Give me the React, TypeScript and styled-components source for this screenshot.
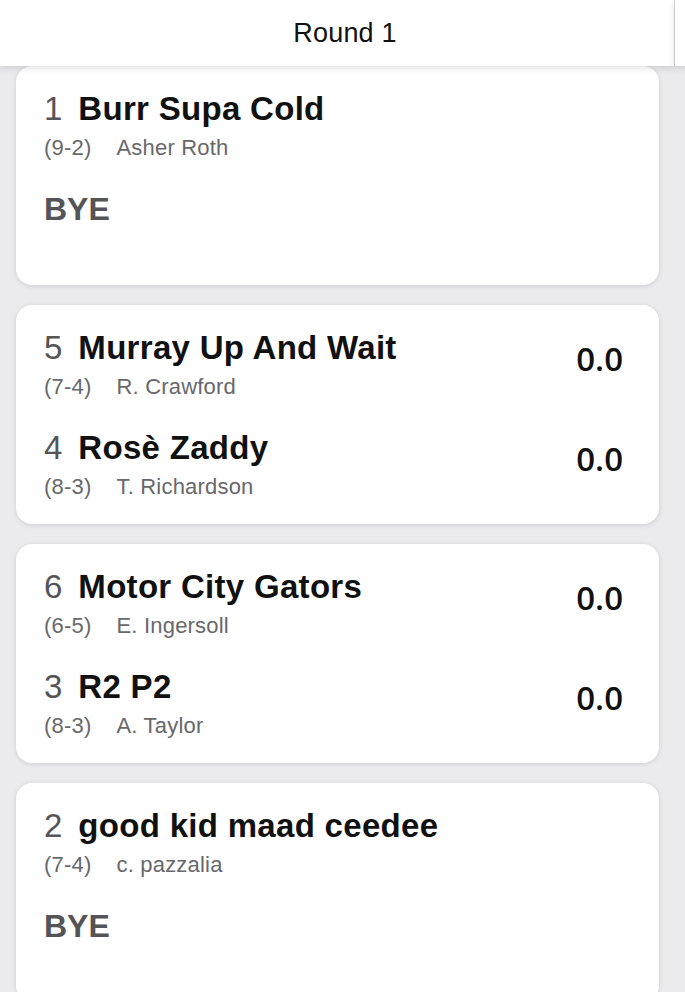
import React from "react";
import styled, { createGlobalStyle } from "styled-components";

const Global = createGlobalStyle`
  html, body {
    margin: 0;
    padding: 0;
    background: #ebebed;
    overflow: hidden;
  }
  body {
    font-family: "Liberation Sans", Arial, sans-serif;
    -webkit-font-smoothing: antialiased;
  }
`;

const Page = styled.div`
  display: flex;
  width: 685px;
  min-height: 992px;
  background: #ebebed;
`;

const Column = styled.section<{ $width?: number }>`
  display: flex;
  flex-direction: column;
  flex: ${(p) => (p.$width ? `0 0 ${p.$width}px` : "1 1 auto")};
  min-width: 0;
`;

const Header = styled.header<{ $divider?: boolean }>`
  position: relative;
  z-index: 2;
  height: 66px;
  box-sizing: border-box;
  padding-left: 16px;
  display: flex;
  align-items: center;
  justify-content: center;
  background: #ffffff;
  border-right: ${(p) => (p.$divider ? "1px solid #d9d9db" : "none")};
  box-shadow: 0 2px 7px rgba(0, 0, 0, 0.13);
  font-family: "Liberation Sans", Arial, sans-serif;
  font-size: 27px;
  letter-spacing: 0.2px;
  color: #111111;
`;

const List = styled.div`
  display: flex;
  flex-direction: column;
  gap: 20px;
  padding: 0 16px;
`;

const Card = styled.article`
  display: flex;
  flex-direction: column;
  gap: 28px;
  padding: 23px 36px 24px 28px;
  background: #ffffff;
  border-radius: 16px;
  box-shadow: 0 1px 5px rgba(0, 0, 0, 0.13);
`;

const TeamRow = styled.div`
  display: flex;
  align-items: center;
  justify-content: space-between;
`;

const Info = styled.div`
  display: flex;
  flex-direction: column;
  gap: 6px;
`;

const NameLine = styled.div`
  display: flex;
  align-items: baseline;
  height: 40px;
  line-height: 40px;
  font-size: 33px;
  white-space: nowrap;
`;

const Seed = styled.span`
  font-weight: 400;
  color: #555558;
  margin-right: 16px;
`;

const Name = styled.span`
  font-weight: 700;
  letter-spacing: 0.3px;
  color: #111111;
`;

const Sub = styled.div`
  display: flex;
  gap: 25px;
  height: 26px;
  line-height: 26px;
  font-size: 22px;
  letter-spacing: 0.2px;
  color: #68686b;
  white-space: nowrap;
`;

const Bye = styled.div`
  height: 40px;
  line-height: 40px;
  font-size: 32px;
  font-weight: 700;
  color: #555558;
`;

const Score = styled.div`
  font-family: "Open Sans", "Liberation Sans", Arial, sans-serif;
  font-size: 33px;
  font-weight: 600;
  color: #111111;
  line-height: 40px;
  margin-top: -10px;
`;

type Team = { seed: number; name: string; record: string; owner: string; score?: string };
type Matchup = { teams: Team[]; bye?: boolean };

const matchups: Matchup[] = [
  { bye: true, teams: [{ seed: 1, name: "Burr Supa Cold", record: "(9-2)", owner: "Asher Roth" }] },
  {
    teams: [
      { seed: 5, name: "Murray Up And Wait", record: "(7-4)", owner: "R. Crawford", score: "0.0" },
      { seed: 4, name: "Rosè Zaddy", record: "(8-3)", owner: "T. Richardson", score: "0.0" },
    ],
  },
  {
    teams: [
      { seed: 6, name: "Motor City Gators", record: "(6-5)", owner: "E. Ingersoll", score: "0.0" },
      { seed: 3, name: "R2 P2", record: "(8-3)", owner: "A. Taylor", score: "0.0" },
    ],
  },
  { bye: true, teams: [{ seed: 2, name: "good kid maad ceedee", record: "(7-4)", owner: "c. pazzalia" }] },
];

function TeamEntry({ team }: { team: Team }) {
  return (
    <TeamRow>
      <Info>
        <NameLine>
          <Seed>{team.seed}</Seed>
          <Name>{team.name}</Name>
        </NameLine>
        <Sub>
          <span>{team.record}</span>
          <span>{team.owner}</span>
        </Sub>
      </Info>
      {team.score && <Score>{team.score}</Score>}
    </TeamRow>
  );
}

export default function App() {
  return (
    <>
      <Global />
      <Page>
        <Column $width={675}>
          <Header $divider>Round 1</Header>
          <List>
            {matchups.map((m, i) => (
              <Card key={i}>
                {m.teams.map((t) => (
                  <TeamEntry key={t.seed} team={t} />
                ))}
                {m.bye && (
                  <TeamRow>
                    <Info>
                      <Bye>BYE</Bye>
                      <Sub />
                    </Info>
                  </TeamRow>
                )}
              </Card>
            ))}
          </List>
        </Column>
        <Column>
          <Header />
        </Column>
      </Page>
    </>
  );
}
